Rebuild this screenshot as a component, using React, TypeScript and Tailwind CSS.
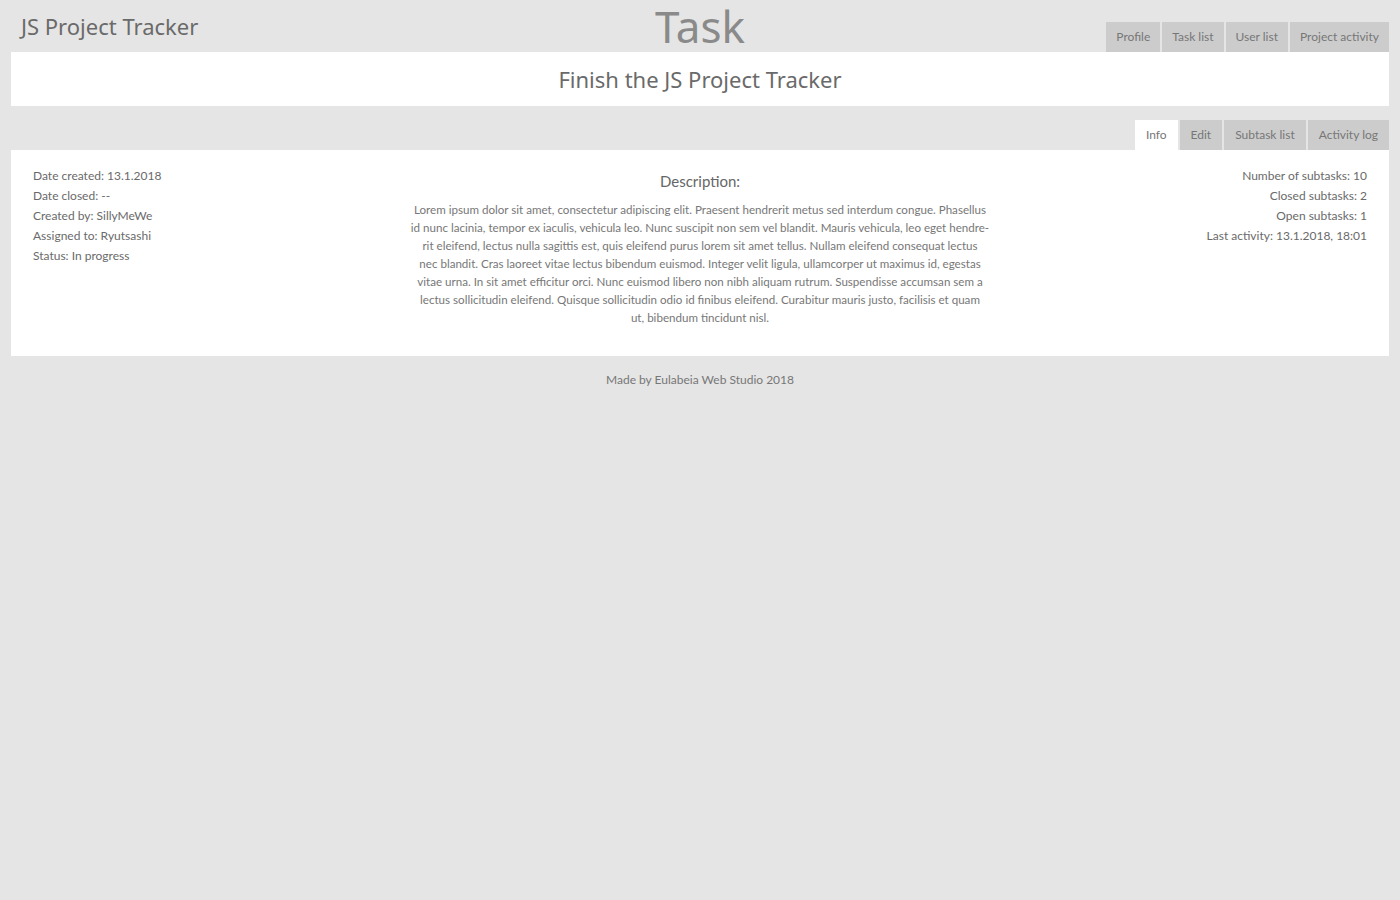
export default function App() {
  const nav = ['Profile', 'Task list', 'User list', 'Project activity'];
  const tabs = ['Info', 'Edit', 'Subtask list', 'Activity log'];
  const info = [
    'Date created: 13.1.2018',
    'Date closed: --',
    'Created by: SillyMeWe',
    'Assigned to: Ryutsashi',
    'Status: In progress',
  ];
  const stats = [
    'Number of subtasks: 10',
    'Closed subtasks: 2',
    'Open subtasks: 1',
    'Last activity: 13.1.2018, 18:01',
  ];
  const description = [
    'Lorem ipsum dolor sit amet, consectetur adipiscing elit. Praesent hendrerit metus sed interdum congue. Phasellus',
    'id nunc lacinia, tempor ex iaculis, vehicula leo. Nunc suscipit non sem vel blandit. Mauris vehicula, leo eget hendre-',
    'rit eleifend, lectus nulla sagittis est, quis eleifend purus lorem sit amet tellus. Nullam eleifend consequat lectus',
    'nec blandit. Cras laoreet vitae lectus bibendum euismod. Integer velit ligula, ullamcorper ut maximus id, egestas',
    'vitae urna. In sit amet efficitur orci. Nunc euismod libero non nibh aliquam rutrum. Suspendisse accumsan sem a',
    'lectus sollicitudin eleifend. Quisque sollicitudin odio id finibus eleifend. Curabitur mauris justo, facilisis et quam',
    'ut, bibendum tincidunt nisl.',
  ];

  return (
    <div className="min-h-[900px] bg-[#e5e5e5] px-[11px] font-['Lato',sans-serif] text-[#6a6a6a]">
      <header className="grid h-[52px] grid-cols-[1fr_auto_1fr]">
        <h1 className="pl-[10px] pt-[9px] font-['Noto_Sans',sans-serif] text-[22px] leading-[34px] text-[#6a6a6a]">
          JS Project Tracker
        </h1>
        <div className="font-['Noto_Sans',sans-serif] text-[44px] leading-[52px] text-[#8a8a8a]">Task</div>
        <nav className="flex items-end justify-end gap-[2px]">
          {nav.map((n) => (
            <div key={n} className="flex h-[30px] items-center bg-[#cccccc] px-[10px] text-[12px] text-[#777]">
              {n}
            </div>
          ))}
        </nav>
      </header>

      <div className="flex h-[54px] items-center justify-center bg-white font-['Noto_Sans',sans-serif] text-[22px] text-[#6a6a6a]">
        Finish the JS Project Tracker
      </div>

      <div className="mt-[14px] flex justify-end gap-[2px]">
        {tabs.map((t, i) => (
          <div
            key={t}
            className={`flex h-[30px] items-center px-[11px] text-[12px] text-[#777] ${i === 0 ? 'bg-white' : 'bg-[#cccccc]'}`}
          >
            {t}
          </div>
        ))}
      </div>

      <section className="grid grid-cols-[1fr_600px_1fr] bg-white px-[22px] pb-[29px] pt-[16px] text-[12px]">
        <ul className="leading-[20px]">
          {info.map((l) => (
            <li key={l}>{l}</li>
          ))}
        </ul>
        <div className="text-center">
          <h2 className="mt-[5px] text-[15px] leading-[20px] text-[#666]">Description:</h2>
          <p className="mt-[10px] text-[11.6px] leading-[18px] text-[#777]">
            {description.map((line) => (
              <span key={line} className="block whitespace-nowrap">
                {line}
              </span>
            ))}
          </p>
        </div>
        <ul className="text-right leading-[20px]">
          {stats.map((l) => (
            <li key={l}>{l}</li>
          ))}
        </ul>
      </section>

      <footer className="pt-[16px] text-center text-[12px] leading-[16px] text-[#777]">
        Made by Eulabeia Web Studio 2018
      </footer>
    </div>
  );
}
